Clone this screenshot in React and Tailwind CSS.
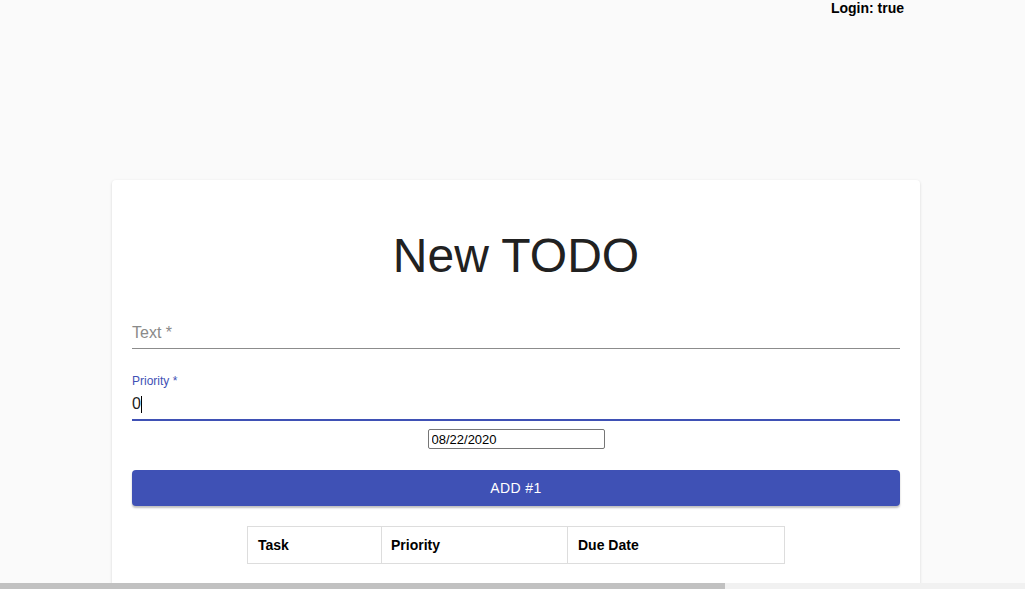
export default function App() {
    const font = {fontFamily: '"Liberation Sans", Arial, sans-serif'};

    return (
        <div className="h-[589px] w-[1025px] flex flex-col overflow-hidden bg-[#fafafa] text-[#212121]" style={font}>
            <div className="flex-1 overflow-hidden">
                <div className="flex justify-end pr-[121px] text-[14px] font-bold leading-4 text-black">
                    Login: true
                </div>

                <div className="ml-[112px] mt-[164px] w-[808px] h-[420px] bg-white rounded shadow-[0_1px_3px_rgba(0,0,0,0.15)] px-5">
                    <h1 className="pt-[48px] text-center text-[48px] leading-[56px] font-normal text-[#212121]">
                        New TODO
                    </h1>

                    {/* Text field */}
                    <div className="mt-4 relative pt-4">
                        <div className="h-[33px] border-b border-[#8c8c8c] flex items-center">
                            <span className="text-[16px] text-[#8a8a8a] pt-[2px]">Text *</span>
                        </div>
                    </div>

                    {/* Priority field */}
                    <div className="mt-[24px] mb-2 relative">
                        <div className="text-[12px] leading-4 text-[#3f51b5]">Priority *</div>
                        <div className="h-[32px] border-b-2 border-[#3f51b5] flex items-center">
                            <span className="text-[16px] text-[#222]">0</span>
                            <span className="w-px h-[17px] bg-black"></span>
                        </div>
                    </div>

                    <div className="flex justify-center">
                        <input
                            type="text"
                            defaultValue="08/22/2020"
                            className="w-[177px] h-[20px] border border-[#767676] rounded-[2px] px-[3px] text-[13px] text-black outline-none"
                            style={font}
                        />
                    </div>

                    <button className="mt-[21px] w-full h-[36px] rounded bg-[#3f51b5] text-white text-[14px] font-medium uppercase tracking-[0.4px] shadow-[0_2px_2px_rgba(0,0,0,0.25)]">
                        Add #1
                    </button>

                    <div className="flex justify-center mt-[20px]">
                        <table className="w-[538px] border-collapse text-[14px] text-black">
                            <thead>
                                <tr className="h-[37px]">
                                    <th className="w-[134px] border border-[#dddddd] text-left font-bold pl-[10px]">Task</th>
                                    <th className="w-[186px] border border-[#dddddd] text-left font-bold pl-[9px]">Priority</th>
                                    <th className="border border-[#dddddd] text-left font-bold pl-[10px]">Due Date</th>
                                </tr>
                            </thead>
                        </table>
                    </div>
                </div>
            </div>

            <div className="h-[6px] bg-[#f1f1f1] flex">
                <div className="w-[725px] bg-[#c1c1c1]"></div>
            </div>
        </div>
    );
}
